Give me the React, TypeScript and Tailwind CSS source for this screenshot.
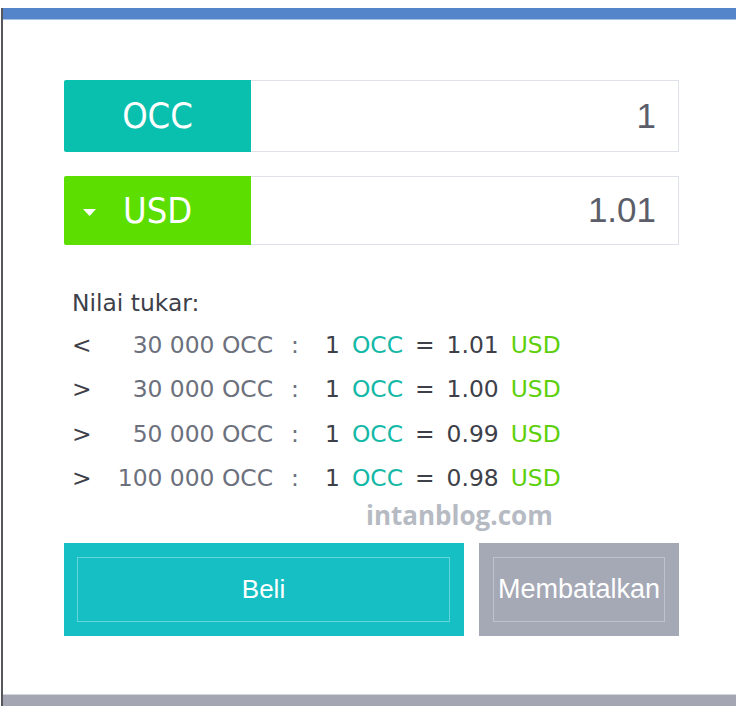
const rates = [
  { sign: "<", amount: "30 000 OCC", value: "1.01" },
  { sign: ">", amount: "30 000 OCC", value: "1.00" },
  { sign: ">", amount: "50 000 OCC", value: "0.99" },
  { sign: ">", amount: "100 000 OCC", value: "0.98" },
];

const verdana = { fontFamily: '"DejaVu Sans", Verdana, sans-serif' };
const tahoma = { fontFamily: '"DejaVu Sans Condensed", "DejaVu Sans", sans-serif' };
const arial = { fontFamily: '"Liberation Sans", Arial, sans-serif' };

function CurrencyRow({
  label,
  value,
  color,
  height,
  dropdown,
}: {
  label: string;
  value: string;
  color: string;
  height: string;
  dropdown?: boolean;
}) {
  return (
    <div className={`flex w-[615px] ${height}`}>
      <div
        className={`w-[187px] shrink-0 rounded-l-[2px] flex items-center text-white text-[36px] font-stretch-condensed ${color} ${
          dropdown ? "pl-[19px]" : "justify-center"
        }`}
        style={tahoma}
      >
        {dropdown && (
          <svg width="13" height="7" viewBox="0 0 13 7" className="mr-[27px] mt-[3px]">
            <polygon points="0,0 13,0 6.5,7" fill="#ffffff" />
          </svg>
        )}
        {label}
      </div>
      <div
        className="flex-1 bg-white border border-l-0 border-[#dfe2ea] flex items-center justify-end pr-[22px] text-[35px] text-[#5b5e69]"
        style={arial}
      >
        {value}
      </div>
    </div>
  );
}

export default function App() {
  return (
    <div className="w-[740px] h-[712px] bg-white pt-[8px] pl-[1px]">
      <div className="w-[735px] h-[698px] border-l-2 border-[#56575c] flex flex-col">
        <div className="h-[11px] shrink-0 bg-[#5484c9]" />
        <div className="h-[1px] shrink-0 bg-[#aac2e8]" />

        <div className="flex-1 pl-[61px] pt-[60px]">
          <CurrencyRow label="OCC" value="1" color="bg-[#09bfad]" height="h-[72px]" />
          <div className="mt-[24px]">
            <CurrencyRow label="USD" value="1.01" color="bg-[#5cde00]" height="h-[69px]" dropdown />
          </div>

          <div className="mt-[36px] ml-[8px] text-[23.4px] text-[#3d4049]" style={verdana}>
            <div className="h-[41.5px] leading-[44.5px]">Nilai tukar:</div>
            {rates.map((r, i) => (
              <div key={i} className="flex h-[44.5px] leading-[44.5px] whitespace-pre">
                <span className="w-[28px] shrink-0">{r.sign}</span>
                <span className="w-[173px] shrink-0 text-right text-[#6c707c]">{r.amount}</span>
                <span className="w-[44px] shrink-0 text-center text-[#6c707c]">:</span>
                <div className="flex gap-[12px] pl-[8px]">
                  <span>1</span>
                  <span className="text-[#13b8a6]">OCC</span>
                  <span>=</span>
                  <span>{r.value}</span>
                  <span className="text-[#5dd00b]">USD</span>
                </div>
              </div>
            ))}
          </div>

          <div
            className="h-[28px] leading-[28px] pl-[302px] text-[26px] font-bold text-[#b6bac3]"
            style={{ fontFamily: '"Open Sans", sans-serif' }}
          >
            intanblog.com
          </div>

          <div className="mt-[14px] flex gap-[15px] w-[615px] h-[93px]" style={arial}>
            <div className="w-[400px] bg-[#15bfc3] pl-[13px] pr-[14px] py-[14px] flex">
              <div className="flex-1 border border-white/35 flex items-center justify-center text-white text-[26px]">
                Beli
              </div>
            </div>
            <div className="w-[200px] bg-[#a5a8b5] p-[14px] flex">
              <div className="flex-1 border border-white/30 flex items-center justify-center text-white text-[27px] whitespace-nowrap">
                Membatalkan
              </div>
            </div>
          </div>
        </div>

        <div className="h-[1px] shrink-0 bg-[#d4d6dc]" />
        <div className="h-[11px] shrink-0 bg-[#a4a7b3]" />
      </div>
    </div>
  );
}
